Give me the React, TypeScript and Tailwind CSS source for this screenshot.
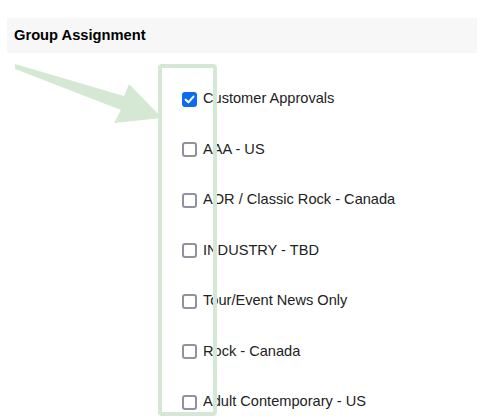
import React from "react";

const GROUPS = [
  { name: "Customer Approvals", checked: true },
  { name: "AAA - US", checked: false },
  { name: "AOR / Classic Rock - Canada", checked: false },
  { name: "INDUSTRY - TBD", checked: false },
  { name: "Tour/Event News Only", checked: false },
  { name: "Rock - Canada", checked: false },
  { name: "Adult Contemporary - US", checked: false },
];

function Check({ checked }: { checked: boolean }) {
  if (checked) {
    return (
      <span className="flex h-[15px] w-[15px] shrink-0 items-center justify-center rounded-[3px] bg-[#0b6cf0]">
        <svg width="11" height="11" viewBox="0 0 10 10">
          <path d="M1.5 5.2 L4 7.6 L8.6 2.4" fill="none" stroke="white" strokeWidth="1.9" strokeLinecap="round" strokeLinejoin="round" />
        </svg>
      </span>
    );
  }
  return <span className="h-[15px] w-[15px] shrink-0 rounded-[3px] border-2 border-[#92929e] bg-white" />;
}

export default function App() {
  return (
    <div
      className="relative h-[419px] w-[494px] overflow-hidden bg-white pl-[7px] pt-[18px] text-[#222]"
      style={{ fontFamily: '"Liberation Sans", Arial, sans-serif' }}
    >
      {/* Section header */}
      <div className="flex h-[35px] w-[470px] items-center bg-[#f7f7f7] pl-[7px] text-[14.7px] font-bold text-black">
        Group Assignment
      </div>

      {/* Group list */}
      <ul className="mt-[21px] pl-[175px]">
        {GROUPS.map((g) => (
          <li key={g.name} className="flex h-[50.5px] items-center gap-[6px] text-[14.6px]">
            <Check checked={g.checked} />
            <span>{g.name}</span>
          </li>
        ))}
      </ul>

      {/* Annotation overlay: arrow + highlight box */}
      <svg className="pointer-events-none absolute inset-0" width="494" height="419" viewBox="0 0 494 419">
        <polygon points="15,64 124,96 129,84 162,118 114,123 121,110 15,69" fill="#d5e8d4" />
        <rect x="160" y="66" width="55" height="348" rx="2" fill="none" stroke="#d5e8d4" strokeWidth="4" />
      </svg>
    </div>
  );
}
